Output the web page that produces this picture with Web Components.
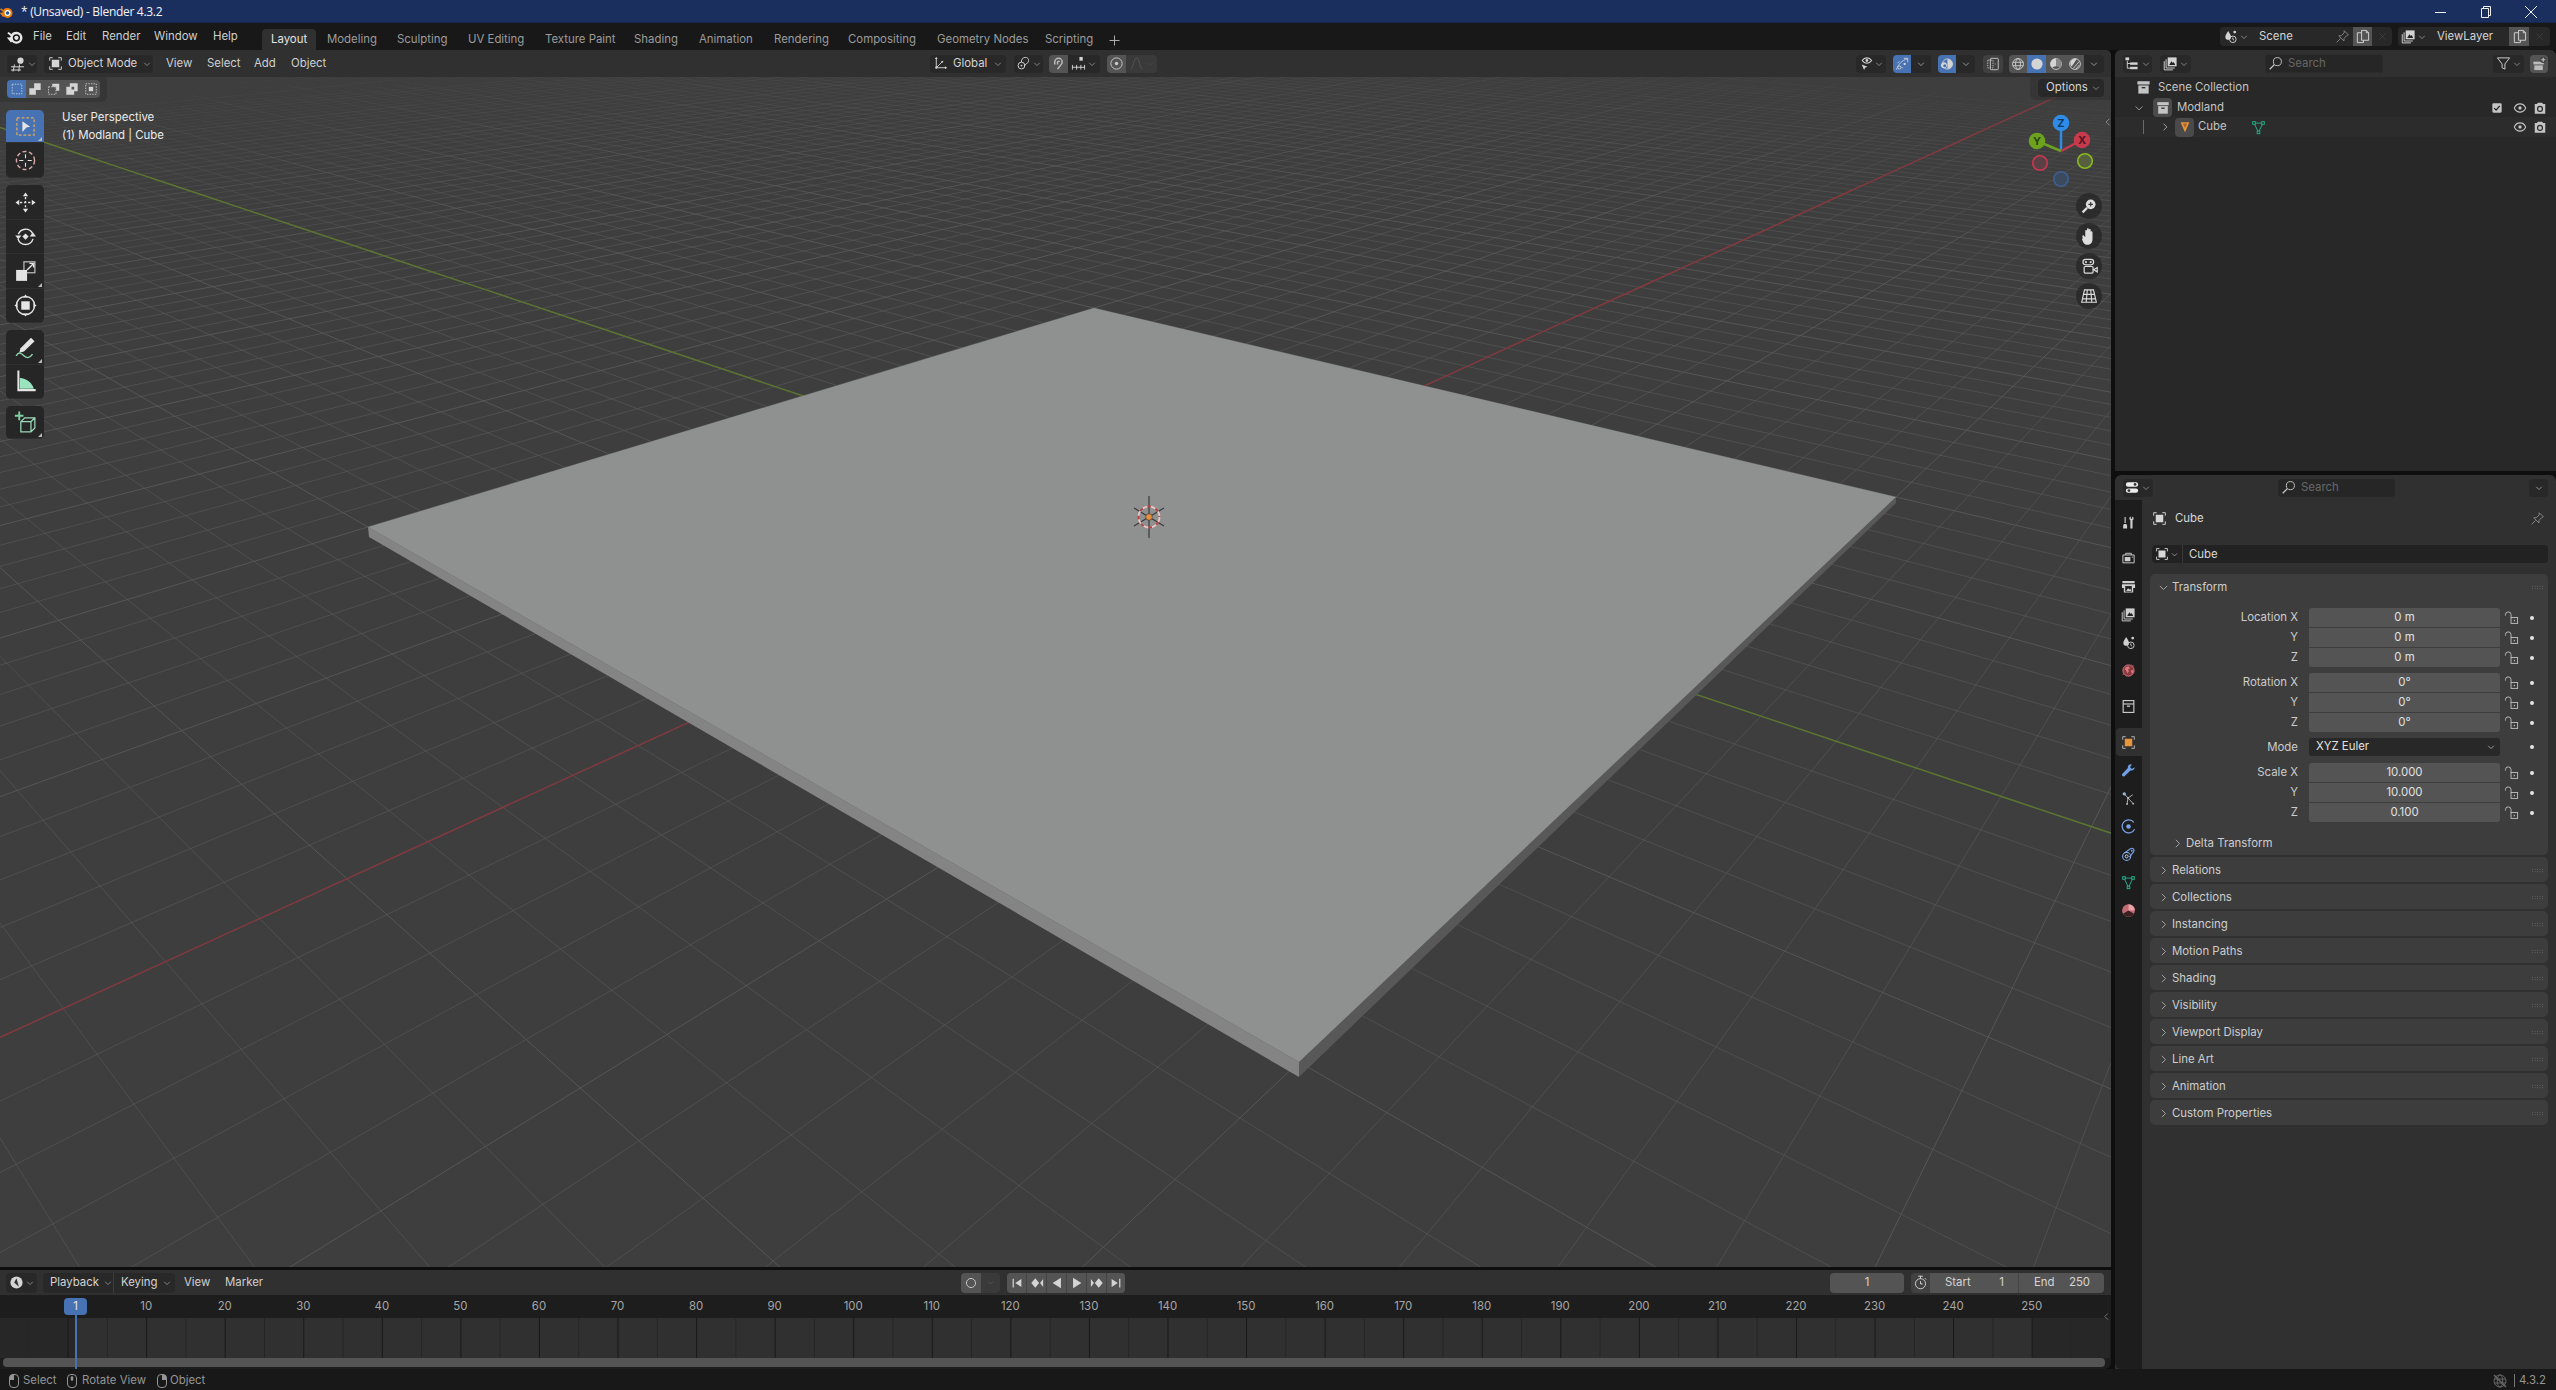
<!DOCTYPE html>
<html lang="en"><head><meta charset="utf-8"><title>Blender</title>
<style>
html,body{margin:0;padding:0;background:#0e0e0e;overflow:hidden}
body{font:11.4px/1 Inter,"Liberation Sans",sans-serif;color:#c8c8c8}
</style></head><body>
<bl-app></bl-app>
<script>
const F='fill="currentColor" stroke="none"';
const ICONS={
 down:'<path d="M3.500 6l4.500 4.500L12.500 6"/>',
 right:'<path d="M6 3.500L10.500 8 6 12.500"/>',
 left:'<path d="M10 3.500L5.500 8l4.500 4.500"/>',
 blender:`<circle cx="9.800" cy="9.200" r="5.700" ${F}/><path ${F} d="M.8 9l5-.4L1.200 5l1.200-1.300 4.700 3.400-1.500-2.400 4-1.200 1 6-6 4.200z"/><circle cx="9.800" cy="9.200" r="3.400" fill="#181818" stroke="none"/><circle cx="9.800" cy="9.200" r="2" ${F}/>`,
 blenderc:`<circle cx="9.800" cy="9.200" r="5.700" fill="#e87d0d" stroke="none"/><path fill="#e87d0d" stroke="none" d="M.8 9l5-.4L1.200 5l1.200-1.300 4.700 3.400-1.500-2.400 4-1.200 1 6-6 4.200z"/><circle cx="9.800" cy="9.200" r="3.400" fill="#fff" stroke="none"/><circle cx="9.800" cy="9.200" r="2" fill="#265787" stroke="none"/>`,
 view3d:`<circle cx="10.500" cy="4.700" r="3.100" ${F}/><path d="M1 10.800h13M1 14h10M4.500 8.500L3 15.500M9.500 8.500l-.8 7"/>`,
 obj:`<path d="M1.800 5V1.800H5M11 1.800h3.200V5M14.200 11v3.200H11M5 14.200H1.800V11"/><rect x="4" y="4" width="8" height="8" ${F}/>`,
 objo:`<path stroke="#bbb" d="M1.800 5V1.800H5M11 1.800h3.200V5M14.200 11v3.200H11M5 14.200H1.800V11"/><rect x="4" y="4" width="8" height="8" fill="#e8963c" stroke="none"/>`,
 m1:`<rect x="2.500" y="2.500" width="11" height="11" stroke-dasharray="1.600 1.400"/>`,
 m2:`<path ${F} d="M7 1.500h7.500V9H9v5.500H1.500V7H7z"/>`,
 m3:`<rect x="1.800" y="5.500" width="8.500" height="8.500" stroke-dasharray="1.600 1.400"/><path ${F} d="M6 2h8v8h-3.500V5.500H6z"/>`,
 m4:`<path ${F} fill-rule="evenodd" d="M5.500 1.500h9v9h-4v4h-9v-9h4zm2 4v3h3v-3z" />`,
 m5:`<rect x="2" y="2" width="12" height="12" stroke-dasharray="1.600 1.400"/><rect x="5.500" y="5.500" width="5" height="5" ${F}/>`,
 tselect:`<rect x="2.500" y="2.500" width="11" height="11" stroke="#e0a95e" stroke-dasharray="1.800 1.200" stroke-width=".8"/><path ${F} d="M6 4.600l5 3.500-2.400.5L6 11.500z"/>`,
 tcursor:`<circle cx="8" cy="8" r="5.800" stroke-width=".9" stroke="#d8a8a8" stroke-dasharray="2.600 1.600"/><path stroke-width=".7" d="M8 4v2.600M8 9.400V12M4 8h2.600M9.400 8H12"/>`,
 tmove:`<path ${F} d="M8 1.600l1.700 2.400H6.300zM8 14.400l1.700-2.400H6.300zM1.600 8l2.400-1.700v3.400zM14.400 8L12 6.300v3.400z"/><path stroke-width=".9" stroke-dasharray="1.400 1.200" d="M8 4.500v7M4.500 8h7"/>`,
 trot:`<path stroke-width=".9" d="M3.400 6.500A5 5 0 0 1 12.500 6M12.800 9.500a5 5 0 0 1-9.600 0"/><path ${F} d="M1.400 7.300h4L3.400 9.800zM10.700 8h4L12.700 5.300z"/><path ${F} d="M8 6l2 2-2 2-2-2z"/>`,
 tscale:`<rect x="7" y="1.800" width="7" height="7" stroke="#bbb" stroke-width=".8" fill="none"/><rect x="2" y="7" width="7" height="7" ${F}/><path stroke-width=".9" d="M9 7l4-4M10.500 2.800h2.700v2.700"/>`,
 ttrans:`<circle cx="8" cy="8" r="5.800" stroke-width=".9"/><rect x="5.300" y="5.300" width="5.400" height="5.400" ${F}/><path ${F} d="M8 .9l1.500 2H6.500zM8 15.100l1.500-2H6.500zM.9 8l2-1.500v3zM15.100 8l-2-1.500v3z"/>`,
 tann:`<path ${F} d="M11.500 1.800l2.300 2.200-6.800 6.600-3 .8.800-3z"/><path stroke="#8fd6b0" stroke-width=".9" d="M2 13.300c2-3 3.500-1.500 5 0s3.500 2 5.500-1"/>`,
 tmeas:`<path ${F} fill-rule="evenodd" d="M2.800 1h1.300v11.800H14.500v1.400H2.800z"/><path fill="#9ae3bf" stroke="none" d="M4.300 5.800c4.400.2 8 3.200 9 6.800h-9z"/>`,
 tadd:`<path stroke="#7fd0a0" stroke-width="1.200" d="M4 1v5.500M1.200 3.700h5.500"/><path stroke="#9ad8b8" stroke-width=".8" d="M5 7.500l2.500-2.500H14v6.500L11.500 14H5zM5 7.500h6.500V14M11.500 7.500L14 5"/>`,
 zoom:`<circle cx="9.500" cy="6.500" r="4.300" ${F}/><path stroke="#333" d="M9.500 4.500v4M7.500 6.500h4"/><path stroke-width="2" d="M2.300 13.700l4-4"/>`,
 hand:`<path ${F} d="M3 9.500c-1-2 .3-2.600 1.200-1.600l.8 1V4c0-1.200 1.400-1.200 1.400 0v2.700V2.800c0-1.300 1.500-1.300 1.500 0v4-3.500c0-1.200 1.500-1.200 1.500 0v4.200-2.500c0-1.200 1.400-1.200 1.400 0v5.500c0 3-2 4.500-4 4.500-2.500 0-3.200-1.500-4.400-4.500z"/>`,
 navcam:`<rect x="2.500" y="2" width="9" height="4.600" rx="2.300"/><circle cx="5" cy="4.300" r=".9" ${F}/><circle cx="9" cy="4.300" r=".9" ${F}/><rect x="3.500" y="8" width="7.500" height="5.500" rx=".8"/><path d="M11.500 10.700l3-1.800v3.600z"/>`,
 navgrid:`<path d="M4 2.500h8l2.500 11h-13zM1.800 10.500h12.400M2.800 6.500h10.400M6.500 2.500l-1 11M9.500 2.500l1 11"/>`,
 axes:`<path d="M3.500 1.800v10.700h10.500M3.500 12.500l7-7"/><circle cx="3.500" cy="12.500" r="1.200" ${F}/><path ${F} d="M3.500 1l1.500 2.300H2zM15 12.500l-2.300 1.500v-3zM11 5l-2.500.5 2 2z"/>`,
 pivot:`<circle cx="5.800" cy="10.200" r="3.600"/><circle cx="5.800" cy="10.200" r="1" ${F}/><path d="M5.700 6.500c0-3 1.600-5 4.300-5 3.500 0 4 3 3 5-1 1.800-3 2.500-4.500 4"/>`,
 magnet:`<path stroke-width="1.600" d="M4 9V6.500a4 4 0 0 1 8 0c0 2-1.500 3.500-3 5l-2 2.500"/><path stroke-width="1.600" d="M7 9V6.500a1 1 0 0 1 2 0"/>`,
 snapinc:`<rect x="9" y="1" width="3.500" height="4" ${F}/><path d="M1.500 9.500v5M6 9.500v5M10.500 9.500v5M14.500 9.500v5M1.500 12h13"/>`,
 prop:`<circle cx="8" cy="8" r="6"/><circle cx="8" cy="8" r="1.800" ${F}/>`,
 falloff:`<path d="M1.500 14c3 0 3.500-12 6.500-12s3.500 12 6.500 12"/>`,
 vis:`<path ${F} d="M4 9l6 2.500-2.500 1-1 2.500z"/><path stroke-width="1.100" d="M4.500 4.800S6.300 2 9.500 2s5 2.800 5 2.800-1.800 2.900-5 2.900-5-2.900-5-2.900z"/><circle cx="9.500" cy="4.800" r="1.500" ${F}/>`,
 gizmo:`<path d="M1.500 14.500C4 8 8 4 14 2M10 1.500h4.500V6M3 7l2-2M9 13l-2-2"/><circle cx="5" cy="12" r="1.800"/><circle cx="11" cy="8" r="1.300" ${F}/>`,
 overlay:`<circle cx="8.500" cy="8" r="5.800" /><path ${F} d="M8.500 2.200a5.800 5.800 0 0 1 0 11.600zM4 6a3.500 3.500 0 0 1 3 6 3.500 3.500 0 1 1-3-6z" /><circle cx="5.500" cy="10" r="1.800" fill="#4772b3" stroke="none"/>`,
 xray:`<rect x="5" y="1.500" width="9" height="13" rx="1"/><rect x="2" y="3.500" width="6" height="9" rx=".5" stroke-dasharray="1.500 1.200"/><path stroke-dasharray="1 1" d="M10 8h2"/>`,
 wire:`<circle cx="8" cy="8" r="6.200"/><ellipse cx="8" cy="8" rx="2.800" ry="6.200"/><path d="M2 6h12M2 10h12"/>`,
 solid:`<circle cx="8" cy="8" r="6.400" ${F}/>`,
 matp:`<circle cx="8" cy="8" r="6.200"/><path ${F} d="M8 1.800a6.200 6.200 0 0 0-4.500 10.500c1-1 2.500-1.500 4.500-1.800z"/><path fill="#888" stroke="none" d="M8 10.500c2 .3 3.500.8 4.500 1.800A6.200 6.200 0 0 0 8 1.800z"/>`,
 rend:`<circle cx="8" cy="8" r="6.200"/><path ${F} d="M3 5a6 6 0 0 1 7-2.600L4 11a6 6 0 0 1-1-6z"/><path d="M6 13l7-8M9 14l4-5"/>`,
 tree:`<rect x="1.500" y="1.500" width="4" height="3" ${F}/><rect x="6.500" y="6.800" width="8" height="2.600" ${F}/><rect x="6.500" y="11.500" width="8" height="2.600" ${F}/><path d="M3.500 5v8h3M3.500 8h3"/>`,
 layer:`<rect x="5" y="1.500" width="9.500" height="9.500" ${F}/><path fill="#222" stroke="none" d="M6.500 9.500l2.500-4 1.500 2 1-1 1.500 3z"/><path d="M3.300 3.500v9.300h9.300M1.300 5.500v9.300h9.300"/>`,
 scene:`<path ${F} d="M5.500 2c2 3 3 4.500 3 6.500a3 3 0 0 1-6 0C2.500 6.500 3.500 5 5.500 2z"/><circle cx="12.500" cy="3.300" r="1.500" ${F}/><circle cx="10.500" cy="11" r="3.500" fill="none"/><path d="M10.500 9v2l1.300 1"/>`,
 copy:`<path d="M7 1.500h5l2.500 2.500v8H7zM12 1.500V4h2.500"/><path d="M7 4H2.500v10.500H9V12"/>`,
 x:`<path d="M3.500 3.500l9 9M12.500 3.500l-9 9"/>`,
 pin:`<path d="M9.800 1.800l4.400 4.400-1.500.6-3 3.200-.2 2.800-5.500-5.500 2.800-.2 3-3zM5.800 10.200L1.800 14.200"/>`,
 search:`<circle cx="10" cy="6" r="4.300"/><path stroke-width="1.400" d="M6.800 9.200l-5 5"/>`,
 filter:`<path d="M1.500 2h13L9.500 8.500V14l-3-1.500v-4z"/>`,
 newcol:`<rect x="1.500" y="6" width="11" height="3" ${F}/><rect x="2.500" y="10" width="9" height="5" ${F}/><circle cx="12" cy="4" r="3.500" fill="#444" stroke="none"/><path stroke-width="1.300" d="M12 1.800v4.400M9.800 4h4.400"/>`,
 coll:`<rect x="1.500" y="1.300" width="13" height="3.500" ${F}/><rect x="2.500" y="5.800" width="11" height="8.700" ${F}/><rect x="6" y="7.500" width="4" height="1.400" fill="#2a2a2a" stroke="none"/>`,
 collo:`<rect x="2.300" y="1.700" width="11.400" height="12.600" fill="none" stroke-width="1.200"/><path stroke-width="1.200" d="M2.300 5.300h11.400"/><rect x="6.300" y="7" width="3.400" height="1.300" ${F}/>`,
 tri:`<path fill="#e8963c" stroke="none" d="M3 2.500h10L8 14z"/><path fill="#a9662a" stroke="none" d="M5.500 4h5L8 9z"/>`,
 mesh:`<path stroke="#22b28c" d="M3.300 3.300h9.400L8 13.300z"/><rect x="1.800" y="1.800" width="2.800" height="2.800" fill="#2a2a2a" stroke="#22b28c"/><rect x="11.400" y="1.800" width="2.800" height="2.800" fill="#2a2a2a" stroke="#22b28c"/><rect x="6.600" y="11.800" width="2.800" height="2.800" fill="#2a2a2a" stroke="#22b28c"/>`,
 check:`<rect x="1.800" y="1.800" width="12.400" height="12.400" rx="1.500" ${F}/><path stroke="#222" stroke-width="1.800" d="M4.300 8.200l2.500 2.600 4.800-5.600"/>`,
 eye:`<path stroke-width="1.200" d="M1.500 8S3.500 3.300 8 3.300 14.500 8 14.500 8 12.500 12.700 8 12.700 1.500 8 1.500 8z"/><circle cx="8" cy="8" r="1.900" ${F}/>`,
 cam:`<path ${F} fill-rule="evenodd" d="M5.500 2h5l1 1.500H14v11H2v-11h2.500zM8 5.500a3.500 3.500 0 1 0 0 7 3.500 3.500 0 0 0 0-7zm0 1.400a2.100 2.100 0 1 1 0 4.200 2.100 2.100 0 0 1 0-4.200z"/>`,
 tool:`<path ${F} d="M10.500 1.500c-1.500.5-2 2-1.300 3.300l.8.900v8.800h2.300V5.700l.9-1c.6-1.300.1-2.800-1.300-3.200v2.600h-1.400zM3 9.500h2.800l.7 2v3H2.300v-3zM3.800 2h1.200v6.500H3.800z"/>`,
 trender:`<path d="M2 5.300h12v8.400H2zM5 5.300V3.500h6v1.800"/><rect x="4" y="7.500" width="6" height="4.500" ${F}/><circle cx="12" cy="7.500" r=".7" ${F}/>`,
 toutput:`<path ${F} d="M1.500 2h13v2.500h-13zM1 5.500h14v4h-2v5h-10v-5h-2z"/><rect x="4.500" y="7.500" width="7" height="6" fill="#222" stroke="none"/><path ${F} d="M5.500 12.800l2-3 1.500 1.500 1-1 1 2.500z"/>`,
 tworld:`<circle cx="8" cy="8" r="6" fill="#8a3a3e" stroke="#d97880" stroke-width="1"/><path fill="#d97880" stroke="none" d="M5 4.500l3-1 1.500 2-2 1.500 1 2-2 2-1-3-1.500-1zM10.500 8l2.500-.5.500 2-2 2z"/><path stroke="#b45a60" stroke-width=".8" d="M1.500 12.500l2-1M11 2l3 1.500"/>`,
 twrench:`<path fill="#6f9fe6" stroke="none" d="M14.500 4.500l-2.800 2-2-2 1.800-3C9.200 1 6.800 2.800 7.300 5.400L1.500 11.500c-.8.9-.5 1.900.1 2.400.6.600 1.600.8 2.400 0l6.100-6c2.600.5 4.800-1.200 4.400-3.400z"/>`,
 tpart:`<circle cx="3.500" cy="3" r="1.800" fill="#8fb4ea" stroke="none"/><path stroke="#bbb" d="M3.500 3l4 4.500M7.500 7.500l5-3.500M7.500 7.500l5.500 6M7.500 7.500l-1 6"/><circle cx="7.500" cy="7.500" r="1" fill="#bbb" stroke="none"/><circle cx="13" cy="13.500" r="1" fill="#bbb" stroke="none"/><circle cx="6.500" cy="13.800" r="1" fill="#bbb" stroke="none"/>`,
 tphys:`<circle cx="8" cy="8" r="2.400" fill="#7ca3e8" stroke="none"/><path stroke="#7ca3e8" stroke-width="1.300" d="M13.700 3.500A7 7 0 1 0 14.500 11"/>`,
 tcons:`<circle cx="6" cy="10" r="4.300" stroke="#7ca3e8" stroke-width="1.200"/><circle cx="6" cy="10" r="1.600" stroke="#cfd8e8"/><path stroke="#7ca3e8" stroke-width="1.200" d="M3.500 6.500L10 1.800c3-1.500 5 1.500 3 4l-4 5"/><circle cx="11.500" cy="4" r="1" fill="#7ca3e8" stroke="none"/>`,
 tmat:`<circle cx="8" cy="8" r="6.800" fill="#c06a72" stroke="none"/><path fill="#3a2020" stroke="none" d="M8 8L2.200 11.500A6.800 6.800 0 0 0 13.800 11.500z"/><path fill="#e6a0a6" stroke="none" d="M8 1.200A6.800 6.800 0 0 1 14.800 8L8 8z"/>`,
 lock:`<rect x="7.500" y="8" width="7" height="6.300"/><path d="M7.500 8V5a3 3 0 0 0-6 0v1"/><rect x="10.500" y="10.500" width="1.200" height="1.500" ${F}/>`,
 jstart:`<path ${F} d="M3 3h1.400v10H3zM13 3.500L6 8l7 4.500z"/>`,
 pkey:`<path ${F} d="M6 2.500L10.500 8 6 13.500 1.500 8zM15 3.500L11.500 8l3.500 4.500z"/>`,
 rplay:`<path ${F} d="M12.500 2v12L3 8z"/>`,
 play:`<path ${F} d="M3.500 2v12L13 8z"/>`,
 nkey:`<path ${F} d="M1 3.500L4.500 8 1 12.500zM10 2.500L14.500 8 10 13.500 5.500 8z"/>`,
 jend:`<path ${F} d="M11.600 3H13v10h-1.400zM3 3.500L10 8l-7 4.500z"/>`,
 rec:`<circle cx="8" cy="8" r="5.200"/>`,
 watch:`<circle cx="8" cy="9.300" r="5.400"/><path d="M8 1v3M5.500 1.300h5M8 6.500v3h2.500M12.500 3.300l1.500 1.500"/>`,
 clock:`<circle cx="8" cy="8" r="6.500" ${F}/><path fill="#303030" stroke="none" d="M8 3.500l2.500 9-5-4.500z"/>`,
 ml:`<rect x="3.500" y="1.500" width="9" height="13" rx="3.500"/><path ${F} d="M8 1.500H6.800A3.300 3.300 0 0 0 3.500 5v2H8z"/>`,
 mm:`<rect x="3.500" y="1.500" width="9" height="13" rx="3.500"/><rect x="6.800" y="3.300" width="2.400" height="4.500" rx="1" ${F}/>`,
 mr:`<rect x="3.500" y="1.500" width="9" height="13" rx="3.500"/><path ${F} d="M8 1.500h1.200A3.300 3.300 0 0 1 12.500 5v2H8z"/>`,
 net:`<circle cx="8" cy="8" r="6"/><ellipse cx="8" cy="8" rx="2.700" ry="6"/><path d="M2 6h12M2 10h12"/><path stroke-width="1.500" d="M2 2l12 12"/>`,
 grip:`<g ${F}><circle cx="2" cy="6.500" r=".6"/><circle cx="5" cy="6.500" r=".6"/><circle cx="8" cy="6.500" r=".6"/><circle cx="11" cy="6.500" r=".6"/><circle cx="14" cy="6.500" r=".6"/><circle cx="2" cy="9.500" r=".6"/><circle cx="5" cy="9.500" r=".6"/><circle cx="8" cy="9.500" r=".6"/><circle cx="11" cy="9.500" r=".6"/><circle cx="14" cy="9.500" r=".6"/></g>`
};
class Base extends HTMLElement{
 connectedCallback(){ if(this.shadowRoot) return; this.attachShadow({mode:'open'}); this.shadowRoot.innerHTML=this.html(); }
 a(n,d=''){const v=this.getAttribute(n);return v===null?d:v;}
}
const def=(n,f)=>{customElements.define(n,class extends Base{html(){return f.call(this,this)}})};

def('bl-icon',e=>{const s=e.a('s','16'),c=e.a('c','currentColor');return `<style>:host{display:inline-flex;flex:none;width:${s}px;height:${s}px;color:${c}}svg{width:100%;height:100%;fill:none;stroke:currentColor;stroke-width:1}</style><svg viewBox="0 0 16 16">${ICONS[e.a('n')]||''}</svg>`});

/* one segment of a button strip */
def('bl-btn',e=>{const w=e.a('w'),bg={dark:'#282828',mid:'#545454',blue:'#4772b3',none:'transparent',dim:'#3a3a3a'}[e.a('v','dark')];
 const caret=e.hasAttribute('caret')?`<bl-icon n="down" s="10" class="c"></bl-icon>`:'';
 const ic=e.a('n')?`<bl-icon n="${e.a('n')}" s="${e.a('s','15')}" c="${e.a('ic','currentColor')}"></bl-icon>`:'';
 return `<style>:host{display:inline-flex;flex:none;align-items:center;justify-content:${e.a('j','center')};box-sizing:border-box;height:${e.a('h','18')}px;${w?`width:${w}px;`:''}background:${bg};color:${e.a('col','#d4d4d4')};padding:${e.a('p','0')};gap:${e.a('g','2')}px;margin-left:${e.a('ml','0')}px;border-radius:${e.a('r','0')};white-space:nowrap}
 .c{opacity:.85}</style>${ic}<slot></slot>${caret}`});
/* a strip of segments with rounded ends */
def('bl-strip',e=>`<style>:host{display:inline-flex;flex:none;align-items:stretch;border-radius:4px;overflow:hidden;margin-left:${e.a('ml','0')}px;gap:${e.a('g','0')}px}</style><slot></slot>`);
def('bl-menu',e=>`<style>:host{display:inline-flex;flex:none;align-items:center;margin-left:${e.a('ml','0')}px;${e.a('w')?`width:${e.a('w')}px;`:''}color:${e.a('col','#cfcfcf')};white-space:nowrap}</style><slot></slot>`);

def('bl-titlebar',()=>`<style>:host{display:flex;align-items:center;height:23px;background:#1b2f5f;color:#f4f4f4;box-shadow:inset 0 -1px #16264c;font:12px "Open Sans","Liberation Sans",sans-serif}
 span{margin-left:8px;flex:1;letter-spacing:-.3px}
 bl-icon{margin-left:-1px}.w{display:flex;align-items:center;margin-right:18px;gap:31px;color:#eee}</style>
 <bl-icon n="blenderc" s="14"></bl-icon><span>* (Unsaved) - Blender 4.3.2</span>
 <div class="w"><svg width="14" height="14" viewBox="0 0 14 14" fill="none" stroke="currentColor"><path d="M1 7.500h11"/></svg><svg width="14" height="14" viewBox="0 0 14 14" fill="none" stroke="currentColor"><path d="M2.500 3.500h7v9h-7zM4.500 3.500v-2h7v9h-2"/></svg><svg width="14" height="14" viewBox="0 0 14 14" fill="none" stroke="currentColor"><path d="M1 1l12 12M13 1L1 13"/></svg></div>`);

def('bl-tab',e=>`<style>:host{display:flex;flex:none;align-items:center;height:21px;width:${e.a('w','60')}px;padding:1px 0 0;box-sizing:border-box;white-space:nowrap;color:#9c9c9c;margin-left:${e.a('ml','0')}px}
 :host([on]){background:#303030;color:#e4e4e4;border-radius:4px 4px 0 0;padding-left:9px}</style><slot></slot>`);

def('bl-topbar',()=>`<style>:host{display:flex;align-items:flex-start;height:27px;background:#181818;box-sizing:border-box}
 .l{display:flex;align-items:center;height:27px;padding-left:6px;width:262px;box-sizing:border-box}
 .tabs{display:flex;align-items:flex-end;height:27px}
 .r{display:flex;align-items:center;height:26px;margin-left:auto;padding-top:1px;box-sizing:border-box;padding-right:6px}</style>
 <div class="l"><bl-icon n="blender" s="17" c="#e8e8e8"></bl-icon>
  <bl-menu ml="10" w="33">File</bl-menu><bl-menu w="36">Edit</bl-menu><bl-menu w="52">Render</bl-menu><bl-menu w="59">Window</bl-menu><bl-menu>Help</bl-menu></div>
 <div class="tabs"><bl-tab on w="54">Layout</bl-tab><bl-tab ml="11" w="70">Modeling</bl-tab><bl-tab w="71">Sculpting</bl-tab><bl-tab w="77">UV Editing</bl-tab><bl-tab w="89">Texture Paint</bl-tab><bl-tab w="65">Shading</bl-tab><bl-tab w="75">Animation</bl-tab><bl-tab w="74">Rendering</bl-tab><bl-tab w="89">Compositing</bl-tab><bl-tab w="108">Geometry Nodes</bl-tab><bl-tab w="64">Scripting</bl-tab><bl-tab w="14"><svg width="11" height="11" viewBox="0 0 11 11" stroke="#aaa" fill="none"><path d="M5.500 .5v10M.5 5.500h10"/></svg></bl-tab></div>
 <div class="r">
  <bl-strip><bl-btn v="dark" w="32" h="19" n="scene" caret g="1"></bl-btn><bl-btn v="dark" w="80" h="19" j="flex-start" p="0 0 0 7px">Scene</bl-btn><bl-btn v="dark" w="21" h="19" n="pin" ic="#888"></bl-btn><bl-btn v="mid" w="19" h="19" n="copy"></bl-btn><bl-btn v="dark" w="20" h="19" n="x" s="11" ic="#444"></bl-btn></bl-strip>
  <bl-strip ml="6"><bl-btn v="dark" w="32" h="19" n="layer" caret g="1"></bl-btn><bl-btn v="dark" w="79" h="19" j="flex-start" p="0 0 0 7px">ViewLayer</bl-btn><bl-btn v="mid" w="20" h="19" n="copy"></bl-btn><bl-btn v="dark" w="21" h="19" n="x" s="11" ic="#444"></bl-btn></bl-strip>
 </div>`);

def('bl-scene',()=>`<style>:host{position:absolute;left:0;top:0;width:2111px;height:1217px;display:block;background:#3d3d3d}
 svg{display:block}</style><svg id="s" width="2111" height="1217" viewBox="0 50 2111 1217"></svg>`);

def('bl-tool',e=>`<style>:host{display:flex;align-items:center;justify-content:center;width:38px;height:${e.a('h','34.5')}px;color:#e4e4e4;background:${e.hasAttribute('on')?'#4772b3':'#262626'};position:relative;box-shadow:inset 0 -1px #303030}
 i{position:absolute;right:2px;bottom:2px;width:0;height:0;border:2px solid transparent;border-right-color:#bbb;border-bottom-color:#bbb}</style>
 <bl-icon n="${e.a('n')}" s="${e.a('s','25')}"></bl-icon>${e.hasAttribute('more')?'<i></i>':''}`);
def('bl-toolbar',()=>`<style>:host{display:flex;flex-direction:column;gap:7px;margin-left:6px;width:38px}
 div{display:flex;flex-direction:column;border-radius:5px;overflow:hidden}</style>
 <div><bl-tool n="tselect" on more h="33"></bl-tool><bl-tool n="tcursor" h="35"></bl-tool></div>
 <div><bl-tool n="tmove"></bl-tool><bl-tool n="trot"></bl-tool><bl-tool n="tscale" more></bl-tool><bl-tool n="ttrans"></bl-tool></div>
 <div><bl-tool n="tann" more></bl-tool><bl-tool n="tmeas"></bl-tool></div>
 <div><bl-tool n="tadd" more h="33"></bl-tool></div>`);

def('bl-gizmo',()=>`<style>:host{position:absolute;left:2020px;top:60px;width:91px;height:270px;display:block}
 .n{position:absolute;left:56px;width:26px;height:26px;border-radius:50%;background:rgba(38,38,38,.75);display:flex;align-items:center;justify-content:center;color:#ddd}
 svg{position:absolute;left:0;top:0}text{font:bold 11px Inter,sans-serif;text-anchor:middle}</style>
 <svg width="91" height="140" viewBox="2020 110 91 140">
  <path d="M2061 151V123" stroke="#2f8ce6" stroke-width="2.500"/><path d="M2061 151L2037 141" stroke="#6ca21e" stroke-width="2.500"/><path d="M2061 151L2082 140" stroke="#c63a4d" stroke-width="2.500"/>
  <circle cx="2061" cy="123" r="8.300" fill="#2f8ce6"/><text x="2061" y="127" fill="#103a66">Z</text>
  <circle cx="2037" cy="141" r="8.300" fill="#6ca21e"/><text x="2037" y="145" fill="#2c440c">Y</text>
  <circle cx="2082" cy="140" r="8.300" fill="#c63a4d"/><text x="2082" y="144" fill="#501620">X</text>
  <circle cx="2040" cy="163" r="7.300" fill="#5b4045" stroke="#c8374d" stroke-width="1.600"/>
  <circle cx="2085" cy="161" r="7.300" fill="#566040" stroke="#8ab81e" stroke-width="1.600"/>
  <circle cx="2061" cy="179" r="7.300" fill="#3c4a60" stroke="#3c608e" stroke-width="1.600"/>
 </svg>
 <div class="n" style="top:83px"><bl-icon n="zoom" s="18"></bl-icon></div>
 <div class="n" style="top:113px"><bl-icon n="hand" s="20"></bl-icon></div>
 <div class="n" style="top:143px"><bl-icon n="navcam" s="19"></bl-icon></div>
 <div class="n" style="top:173px"><bl-icon n="navgrid" s="18"></bl-icon></div>`);

def('bl-vhead',()=>`<style>:host{display:flex;align-items:center;height:27px;background:#303030;box-sizing:border-box;padding-left:7px;color:#d8d8d8}
 .sp{margin-left:auto}.g{display:flex;align-items:center}span{flex:1}</style>
 <bl-strip><bl-btn w="30" h="18" n="view3d" caret g="1" s="16" p="0 0 0 2px"></bl-btn></bl-strip>
 <bl-strip ml="7"><bl-btn w="109" h="18" n="obj" caret p="0 6px 0 4px" g="5" s="15" j="space-between"><span>Object Mode</span></bl-btn></bl-strip>
 <bl-menu ml="13" w="41">View</bl-menu><bl-menu w="47">Select</bl-menu><bl-menu w="37">Add</bl-menu><bl-menu w="40">Object</bl-menu>
 <bl-strip ml="599"><bl-btn w="76" h="18" n="axes" caret p="0 3px" g="5" s="15" j="space-between"><span>Global</span></bl-btn></bl-strip>
 <bl-strip ml="8"><bl-btn w="29" h="18" n="pivot" caret g="1"></bl-btn></bl-strip>
 <bl-strip ml="6"><bl-btn v="mid" w="19" h="18" n="magnet" ic="#bbb"></bl-btn><bl-btn w="32" h="18" n="snapinc" caret g="1"></bl-btn></bl-strip>
 <bl-strip ml="7"><bl-btn v="mid" w="19" h="18" n="prop" ic="#ccc"></bl-btn><bl-btn w="31" h="18" n="falloff" caret g="1" v="dim" ic="#555" col="#555"></bl-btn></bl-strip>
 <div class="g sp" style="margin-right:7px">
  <bl-strip><bl-btn w="30" h="18" n="vis" caret g="1"></bl-btn></bl-strip>
  <bl-strip ml="7"><bl-btn v="blue" w="18" h="18" n="gizmo" s="14"></bl-btn><bl-btn w="20" h="18" g="0"><bl-icon n="down" s="10"></bl-icon></bl-btn></bl-strip>
  <bl-strip ml="7"><bl-btn v="blue" w="18" h="18" n="overlay" s="14"></bl-btn><bl-btn w="19" h="18"><bl-icon n="down" s="10"></bl-icon></bl-btn></bl-strip>
  <bl-strip ml="8"><bl-btn v="dim" w="20" h="18" n="xray" s="14" style="background:#404040"></bl-btn></bl-strip>
  <bl-strip ml="6"><bl-btn v="mid" w="18" h="18" n="wire" s="14"></bl-btn><bl-btn v="blue" w="19" h="18" n="solid" s="14"></bl-btn><bl-btn v="mid" w="19" h="18" n="matp" s="14"></bl-btn><bl-btn v="mid" w="19" h="18" n="rend" s="14"></bl-btn><bl-btn w="20" h="18"><bl-icon n="down" s="10"></bl-icon></bl-btn></bl-strip>
 </div>`);

def('bl-viewport',()=>`<style>:host{display:block;position:relative;height:1217px;overflow:hidden;border-top-right-radius:6px;background:#3d3d3d}
 .fg{position:relative;display:flex;flex-direction:column;height:100%}
 .ts{display:flex;align-items:flex-start;height:21px}
 .bk{background:rgba(48,48,48,.55);padding:3px 7px 4px 7px;height:18px;border-bottom-right-radius:6px;display:flex}
 .op{margin-left:auto;padding:2px 7px 3px 8px;border-bottom-left-radius:6px;border-bottom-right-radius:0}
 .bd{display:flex;margin-top:12px}
 .t{margin:-2px 0 0 18px;color:#ececec;line-height:18px}
 .t div{white-space:nowrap}
 .ar{position:absolute;left:2102px;top:66px;color:#a0a0a0}</style>
 <bl-scene></bl-scene>
 <div class="fg"><bl-vhead></bl-vhead>
  <div class="ts"><div class="bk"><bl-strip><bl-btn v="blue" w="19" h="18" n="m1" s="14"></bl-btn><bl-btn v="mid" w="18.5" h="18" n="m2" s="14"></bl-btn><bl-btn v="mid" w="18.5" h="18" n="m3" s="14"></bl-btn><bl-btn v="mid" w="18.5" h="18" n="m4" s="14"></bl-btn><bl-btn v="mid" w="18.5" h="18" n="m5" s="14"></bl-btn></bl-strip></div>
   <div class="bk op"><bl-btn w="66" h="18" caret r="4px" g="2" j="space-between" p="0 3px 0 8px">Options</bl-btn></div></div>
  <div class="bd"><bl-toolbar></bl-toolbar><div class="t"><div>User Perspective</div><div>(1) Modland | Cube</div></div></div>
 </div>
 <bl-gizmo></bl-gizmo><bl-icon class="ar" n="left" s="12"></bl-icon>`);

def('bl-trow',e=>`<style>:host{display:flex;align-items:center;height:20px;box-sizing:border-box;padding-top:${e.hasAttribute('alt')?0:1}px;color:#c4c4c4;background:${e.hasAttribute('alt')?'#2c2c2c':'transparent'};position:relative}
 .e{margin-left:auto;display:flex;gap:4px;padding-right:9px;align-items:center}</style><slot></slot><div class="e"><slot name="e"></slot></div>`);

def('bl-outliner',()=>`<style>:host{display:block;height:421px;background:#282828;border-radius:6px 6px 0 0;overflow:hidden}
 .h{display:flex;align-items:center;height:27px;background:#303030;padding-left:8px;color:#ddd}
 .ib{display:inline-flex;align-items:center;justify-content:center;width:19px;height:19px;border-radius:4px;background:#4a4a4a;margin-right:5px}
 .s{margin-left:74px;width:118px;box-sizing:border-box;height:19px;background:#262626;border-radius:4px;display:flex;align-items:center;padding-left:3px;color:#666;gap:5px;box-shadow:inset 0 0 0 1px #2c2c2c}</style>
 <div class="h"><bl-strip><bl-btn w="29" h="18" n="tree" caret g="2" s="15"></bl-btn></bl-strip><bl-strip ml="8"><bl-btn w="31" h="18" n="layer" caret g="1" s="15"></bl-btn></bl-strip>
  <div class="s"><bl-icon n="search" s="15" c="#c8c8c8"></bl-icon>Search</div>
  <bl-strip ml="110"><bl-btn w="31" h="18" n="filter" caret g="1"></bl-btn></bl-strip><bl-strip ml="6"><bl-btn v="mid" w="18" h="18" n="newcol" s="15" col="#bbb"></bl-btn></bl-strip></div>
 <bl-trow><bl-icon n="coll" s="15" style="margin-left:21px;margin-right:7px"></bl-icon>Scene Collection</bl-trow>
 <bl-trow><bl-icon n="down" s="12" style="margin-left:18px"></bl-icon><span class="ib" style="margin-left:8px;margin-right:5px"><bl-icon n="coll" s="14"></bl-icon></span>Modland
  <bl-icon slot="e" n="check" s="12"></bl-icon><bl-icon slot="e" n="eye" s="14" style="margin-left:6px"></bl-icon><bl-icon slot="e" n="cam" s="14" style="margin-left:2px"></bl-icon></bl-trow>
 <bl-trow alt><span style="margin-left:28px;width:1px;height:14px;background:#6a6a6a"></span><bl-icon n="right" s="12" style="margin-left:15px"></bl-icon><span class="ib" style="margin-left:4px;margin-right:4px"><bl-icon n="tri" s="14"></bl-icon></span>Cube<bl-icon n="mesh" s="15" style="margin-left:24px"></bl-icon>
  <bl-icon slot="e" n="eye" s="14"></bl-icon><bl-icon slot="e" n="cam" s="14" style="margin-left:2px"></bl-icon></bl-trow>`);

def('bl-prop',e=>{const c={top:'3px 3px 0 0',mid:'0',bot:'0 0 3px 3px',one:'3px'}[e.a('pos','one')];const dd=e.hasAttribute('dd');
 return `<style>:host{display:grid;grid-template-columns:159px 191px 22px 20px 1fr;height:${e.a('h','19')}px;align-items:center;margin-top:${e.a('mt','1')}px}
 .l{text-align:right;padding-right:11px;color:#cccccc;white-space:nowrap;padding-top:1px}
 .f{height:100%;background:${dd?'#282828':'#545454'};border-radius:${c};display:flex;align-items:center;justify-content:${dd?'space-between':'center'};color:#e0e0e0;padding:${dd?'0 4px 0 7px':'0'};box-sizing:border-box}
 .k{display:flex;justify-content:center;color:#bdbdbd}.d{width:4px;height:4px;border-radius:50%;background:#e4e4e4;justify-self:center}</style>
 <div class="l">${e.a('label')}</div><div class="f">${e.a('value')}${dd?'<bl-icon n="down" s="10"></bl-icon>':''}</div>
 <div class="k">${dd?'':'<bl-icon n="lock" s="15"></bl-icon>'}</div><div class="d"></div>`});

def('bl-panel',e=>{const op=e.hasAttribute('open');return `<style>:host{display:block;width:398px;background:#3d3d3d;border-radius:5px;margin:${e.a('mt','2')}px 0 0 8px;overflow:hidden}
 .h{display:flex;align-items:center;height:25px;color:#cdcdcd;padding:2px 0 0 7px;box-sizing:border-box}
 .h bl-icon.a{margin-right:2px;color:#b8b8b8}.g{margin-left:auto;margin-right:4px;color:#888;opacity:.9}
 .b{padding-top:8px}</style>
 <div class="h"><bl-icon class="a" n="${op?'down':'right'}" s="13"></bl-icon>${e.a('title')}<bl-icon class="g" n="grip" s="13"></bl-icon></div>${op?'<div class="b"><slot></slot></div>':''}`});

def('bl-tabicon',e=>`<style>:host{display:flex;align-items:center;justify-content:center;height:28px;width:27px;margin-top:${e.a('mt','0')}px;box-sizing:border-box;color:#cfcfcf}
 :host([on]){background:#303030;border-radius:4px 0 0 4px;margin-left:1px;width:26px;padding-right:1px}</style><bl-icon n="${e.a('n')}" s="15"></bl-icon>`);

def('bl-props',()=>`<style>:host{display:flex;flex-direction:column;height:894px;border-radius:6px 6px 0 0;overflow:hidden;background:#303030}
 .h{display:flex;align-items:center;height:25px;padding-left:8px;flex:none;color:#ddd}
 .s{margin-left:125px;width:117px;height:18px;background:#262626;border-radius:4px;box-sizing:border-box;display:flex;align-items:center;gap:5px;padding-left:3px;color:#666}
 .m{display:flex;flex:1;min-height:0}
 .t{width:27px;background:#1d1d1d;padding-top:8px;border-bottom-left-radius:6px}
 .c{flex:1}
 .bc{display:flex;align-items:center;height:36px;padding:1px 11px 0 10px;box-sizing:border-box;color:#d8d8d8;gap:8px}
 .n{display:flex;margin:9px 0 0 10px;width:396px;height:18px;background:#222;border-radius:4px;align-items:center;color:#d8d8d8;overflow:hidden}
 .n div{display:flex;align-items:center;justify-content:center;gap:1px;width:30px;height:100%;border-right:1px solid #383838;margin-right:6px}</style>
 <div class="h"><bl-strip><bl-btn w="30" h="18" caret g="2"><svg width="14" height="13" viewBox="0 0 16 14"><rect x="1" y="1" width="14" height="5" rx="2.5" fill="#eee"/><rect x="1" y="8" width="14" height="5" rx="2.5" fill="#eee"/><circle cx="11.500" cy="3.500" r="1.600" fill="#333"/><circle cx="4.500" cy="10.500" r="1.600" fill="#333"/></svg></bl-btn></bl-strip>
  <div class="s"><bl-icon n="search" s="15" c="#c8c8c8"></bl-icon>Search</div><bl-strip ml="134"><bl-btn w="19" h="18"><bl-icon n="down" s="10"></bl-icon></bl-btn></bl-strip></div>
 <div class="m"><div class="t">
  <bl-tabicon n="tool"></bl-tabicon><bl-tabicon n="trender" mt="7"></bl-tabicon><bl-tabicon n="toutput" mt="1"></bl-tabicon><bl-tabicon n="layer"></bl-tabicon><bl-tabicon n="scene"></bl-tabicon><bl-tabicon n="tworld"></bl-tabicon><bl-tabicon n="collo" mt="8"></bl-tabicon><bl-tabicon n="objo" mt="8" on></bl-tabicon><bl-tabicon n="twrench"></bl-tabicon><bl-tabicon n="tpart"></bl-tabicon><bl-tabicon n="tphys"></bl-tabicon><bl-tabicon n="tcons"></bl-tabicon><bl-tabicon n="mesh"></bl-tabicon><bl-tabicon n="tmat"></bl-tabicon>
 </div><div class="c">
  <div class="bc"><bl-icon n="obj" s="15"></bl-icon>Cube<bl-icon n="pin" s="15" c="#8a8a8a" style="margin-left:auto"></bl-icon></div>
  <div class="n"><div><bl-icon n="obj" s="14"></bl-icon><bl-icon n="down" s="9"></bl-icon></div><span style="padding-top:1px">Cube</span></div>
  <bl-panel title="Transform" open mt="11">
   <bl-prop label="Location X" value="0 m" pos="top" mt="1"></bl-prop><bl-prop label="Y" value="0 m" pos="mid"></bl-prop><bl-prop label="Z" value="0 m" pos="bot"></bl-prop>
   <bl-prop label="Rotation X" value="0°" pos="top" mt="6"></bl-prop><bl-prop label="Y" value="0°" pos="mid"></bl-prop><bl-prop label="Z" value="0°" pos="bot"></bl-prop>
   <bl-prop label="Mode" value="XYZ Euler" dd mt="6" h="18"></bl-prop>
   <bl-prop label="Scale X" value="10.000" pos="top" mt="7"></bl-prop><bl-prop label="Y" value="10.000" pos="mid"></bl-prop><bl-prop label="Z" value="0.100" pos="bot"></bl-prop>
   <div style="display:flex;align-items:center;box-sizing:border-box;height:22px;margin-top:11px;padding:1px 0 2px 21px;color:#cdcdcd"><bl-icon n="right" s="13" style="margin-right:2px;color:#b8b8b8"></bl-icon>Delta Transform</div>
  </bl-panel>
  <bl-panel title="Relations"></bl-panel><bl-panel title="Collections"></bl-panel><bl-panel title="Instancing"></bl-panel><bl-panel title="Motion Paths"></bl-panel><bl-panel title="Shading"></bl-panel><bl-panel title="Visibility"></bl-panel><bl-panel title="Viewport Display"></bl-panel><bl-panel title="Line Art"></bl-panel><bl-panel title="Animation"></bl-panel><bl-panel title="Custom Properties"></bl-panel>
 </div></div>`);

def('bl-timeline',()=>{const nums=[];for(let f=10;f<=250;f+=10)nums.push(`<span>${f}</span>`);
 return `<style>:host{display:flex;flex-direction:column;height:99px;position:relative;background:#1d1d1d;border-radius:0 0 6px 0;overflow:hidden}
 .h{display:flex;align-items:center;height:25px;background:#303030;padding-left:6px;color:#d4d4d4;flex:none}
 .r{display:flex;height:23px;background:#1d1d1d;padding:1px 0 0 106.9px;box-sizing:border-box;align-items:center;color:#a6a6a6;flex:none}
 .r span{width:78.57px;flex:none;text-align:center}
 .t{height:40px;flex:none;background:linear-gradient(90deg,#181818 1px,transparent 1px) 67.6px 0/78.57px 100%,linear-gradient(90deg,#252525 1px,transparent 1px) 28.3px 0/78.57px 100%,linear-gradient(#303030,#303030) 75.5px 0/1956.5px 100% no-repeat,#272727}
 .sb{height:9px;background:#545454;border-radius:4px;margin:0 6px 0 3px;flex:none}
 .in{position:absolute;left:64px;top:28px;width:23px;height:17px;background:#4772b3;border-radius:4px;color:#e8e8e8;display:flex;align-items:center;justify-content:center}
 .ln{position:absolute;left:75px;top:45px;bottom:0;width:1.5px;background:#4772b3}
 .ka{position:absolute;left:2101px;top:41px;color:#9a9a9a}</style>
 <div class="h"><bl-strip><bl-btn w="31" h="20" n="clock" caret g="1"></bl-btn></bl-strip>
  <bl-strip ml="6"><bl-btn w="71" h="20" caret p="0 4px 0 7px" g="4" j="space-between" style="border-right:1px solid #3c3c3c"><span>Playback</span></bl-btn><bl-btn w="61" h="20" caret p="0 4px 0 7px" g="4" j="space-between"><span>Keying</span></bl-btn></bl-strip>
  <bl-menu ml="9" w="41">View</bl-menu><bl-menu w="40">Marker</bl-menu>
  <bl-strip ml="696"><bl-btn v="mid" w="20" h="20" n="rec" s="14"></bl-btn><bl-btn w="19" h="20" v="dim"><bl-icon n="down" s="9" c="#666"></bl-icon></bl-btn></bl-strip>
  <bl-strip ml="7" g="1" style="background:#444"><bl-btn v="mid" w="19" h="20" n="jstart" s="14"></bl-btn><bl-btn v="mid" w="19" h="20" n="pkey" s="14"></bl-btn><bl-btn v="mid" w="19" h="20" n="rplay" s="14"></bl-btn><bl-btn v="mid" w="19" h="20" n="play" s="14"></bl-btn><bl-btn v="mid" w="19" h="20" n="nkey" s="14"></bl-btn><bl-btn v="mid" w="18" h="20" n="jend" s="14"></bl-btn></bl-strip>
  <bl-strip ml="705"><bl-btn v="mid" w="74" h="20">1</bl-btn></bl-strip>
  <bl-strip ml="7"><bl-btn v="dim" w="19" h="20" n="watch" s="15" style="background:#414141"></bl-btn><bl-btn v="mid" w="89" h="20" j="space-between" p="0 14px 0 15px" style="border-right:1px solid #444"><span>Start</span><span>1</span></bl-btn><bl-btn v="mid" w="85" h="20" j="space-between" p="0 14px 0 15px"><span>End</span><span>250</span></bl-btn></bl-strip>
 </div>
 <div class="r">${nums.join('')}</div><div class="t"></div><div class="sb"></div>
 <div class="ln"></div><div class="in">1</div><bl-icon class="ka" n="left" s="11"></bl-icon>`});

def('bl-status',()=>`<style>:host{display:flex;align-items:center;height:21px;box-sizing:border-box;padding:2px 0 0 6px;background:#181818;color:#959595}
 span{flex:none}.r{margin-left:auto;display:flex;align-items:center;padding-right:10px}
 .r i{width:1px;height:13px;background:#777;margin:0 4px 0 6px}</style>
 <bl-icon n="ml" style="margin-right:1px"></bl-icon><span style="width:41px">Select</span><bl-icon n="mm" style="margin-right:2px"></bl-icon><span style="width:72px">Rotate View</span><bl-icon n="mr"></bl-icon><span>Object</span>
 <div class="r"><bl-icon n="net" c="#666"></bl-icon><i></i>4.3.2</div>`);

def('bl-app',()=>`<style>:host{display:grid;grid-template-rows:23px 27px 1319px 21px;width:2556px;height:1390px;overflow:hidden;background:#0e0e0e}
 .m{display:grid;grid-template-columns:2111px 441px;column-gap:4px}
 .c{display:flex;flex-direction:column}</style>
 <bl-titlebar></bl-titlebar><bl-topbar></bl-topbar>
 <div class="m"><div class="c" style="gap:3px"><bl-viewport></bl-viewport><bl-timeline></bl-timeline></div>
 <div class="c" style="gap:4px"><bl-outliner></bl-outliner><bl-props></bl-props></div></div>
 <bl-status></bl-status>`);

/* draw the 3D scene: a floor grid projected through the homography of the plane's four corners */
function paint(){
 const app=document.querySelector('bl-app');
 const vp=app.shadowRoot.querySelector('bl-viewport');
 const sc=vp.shadowRoot.querySelector('bl-scene');
 const svg=sc.shadowRoot.getElementById('s');
 const q=[[1299,1062],[1896,497],[1094,308],[368,527]];
 const [x0,y0]=q[0],[x1,y1]=q[1],[x2,y2]=q[2],[x3,y3]=q[3];
 const dx1=x1-x2,dx2=x3-x2,sx=x0-x1+x2-x3,dy1=y1-y2,dy2=y3-y2,sy=y0-y1+y2-y3;
 const den=dx1*dy2-dx2*dy1,g=(sx*dy2-dx2*sy)/den,h=(dx1*sy-sx*dy1)/den;
 const a=x1-x0+g*x1,b=x3-x0+h*x3,c=x0,d=y1-y0+g*y1,e=y3-y0+h*y3,f=y0;
 const P=(wx,wy)=>{const u=(wx+10)/20,v=(wy+10)/20,w=g*u+h*v+1;return w<=.02?null:[(a*u+b*v+c)/w,(d*u+e*v+f)/w,w]};
 const seg=(x,y,X,Y)=>{const A=P(x,y),B=P(X,Y);return A&&B?`M${A[0].toFixed(1)} ${A[1].toFixed(1)}L${B[0].toFixed(1)} ${B[1].toFixed(1)}`:''};
 const R=80,buckets={},step=4;
 const add=(k,s)=>{if(s)(buckets[k]=buckets[k]||[]).push(s)};
 const lv=(t,s,major)=>{const dist=Math.hypot(t,s),fade=Math.min(1,Math.max(0,(R-dist)/(R-30)));return (major?1:.68)*fade;};
 for(let i=-R;i<=R;i++){
  const m=i%5===0;
  if(i===0)continue;
  for(let s=-R;s<R;s+=step){
    const k=Math.round(lv(i,s+step/2,m)*10);
    if(k>0){add(k,seg(i,s,i,s+step));add(k,seg(s,i,s+step,i));}
  }
 }
 let out='<rect x="0" y="50" width="2111" height="1217" fill="#3e3e3e"/>';
 for(const k in buckets)out+=`<path d="${buckets[k].join('')}" stroke="#5c5c5c" stroke-opacity="${(k/10*.78).toFixed(2)}" stroke-width="1" fill="none"/>`;
 const axis=(p,col)=>{let s='';for(let t=-R;t<R;t+=step)s+=p(t,t+step);return `<path d="${s}" stroke="${col}" stroke-width="1.5" fill="none"/>`};
 out+=axis((t,u)=>seg(t,0,u,0),'#823a3f');
 out+=axis((t,u)=>seg(0,t,0,u),'#5c7530');
 /* plane */
 const B=[[1299,1077],[1896,503],[1094,308],[369,537]];
 out+=`<polygon points="${q[3]} ${q[0]} ${B[0]} ${B[3]}" fill="#848484"/>`;
 out+=`<polygon points="${q[0]} ${q[1]} ${B[1]} ${B[0]}" fill="#585858"/>`;
 out+=`<polygon points="${q[0]} ${q[1]} ${q[2]} ${q[3]}" fill="#8f9090"/>`;
 /* 3D cursor + origin */
 out+=`<g transform="translate(1149 517)" fill="none"><path d="M0-21V21M-15-9L15 9M-15 9L15-9" stroke="#3a3a3a" stroke-width="1.2"/><circle r="10.5" stroke="#e8c8c8" stroke-width="1.8" stroke-dasharray="5 3.5"/><circle r="10.5" stroke="#c04040" stroke-width="1.8" stroke-dasharray="3.5 5" stroke-dashoffset="-5"/><circle r="3.3" fill="#e8903c" stroke="#333" stroke-width=".6"/></g>`;
 svg.innerHTML=out;
}
paint();
</script>
</body></html>
